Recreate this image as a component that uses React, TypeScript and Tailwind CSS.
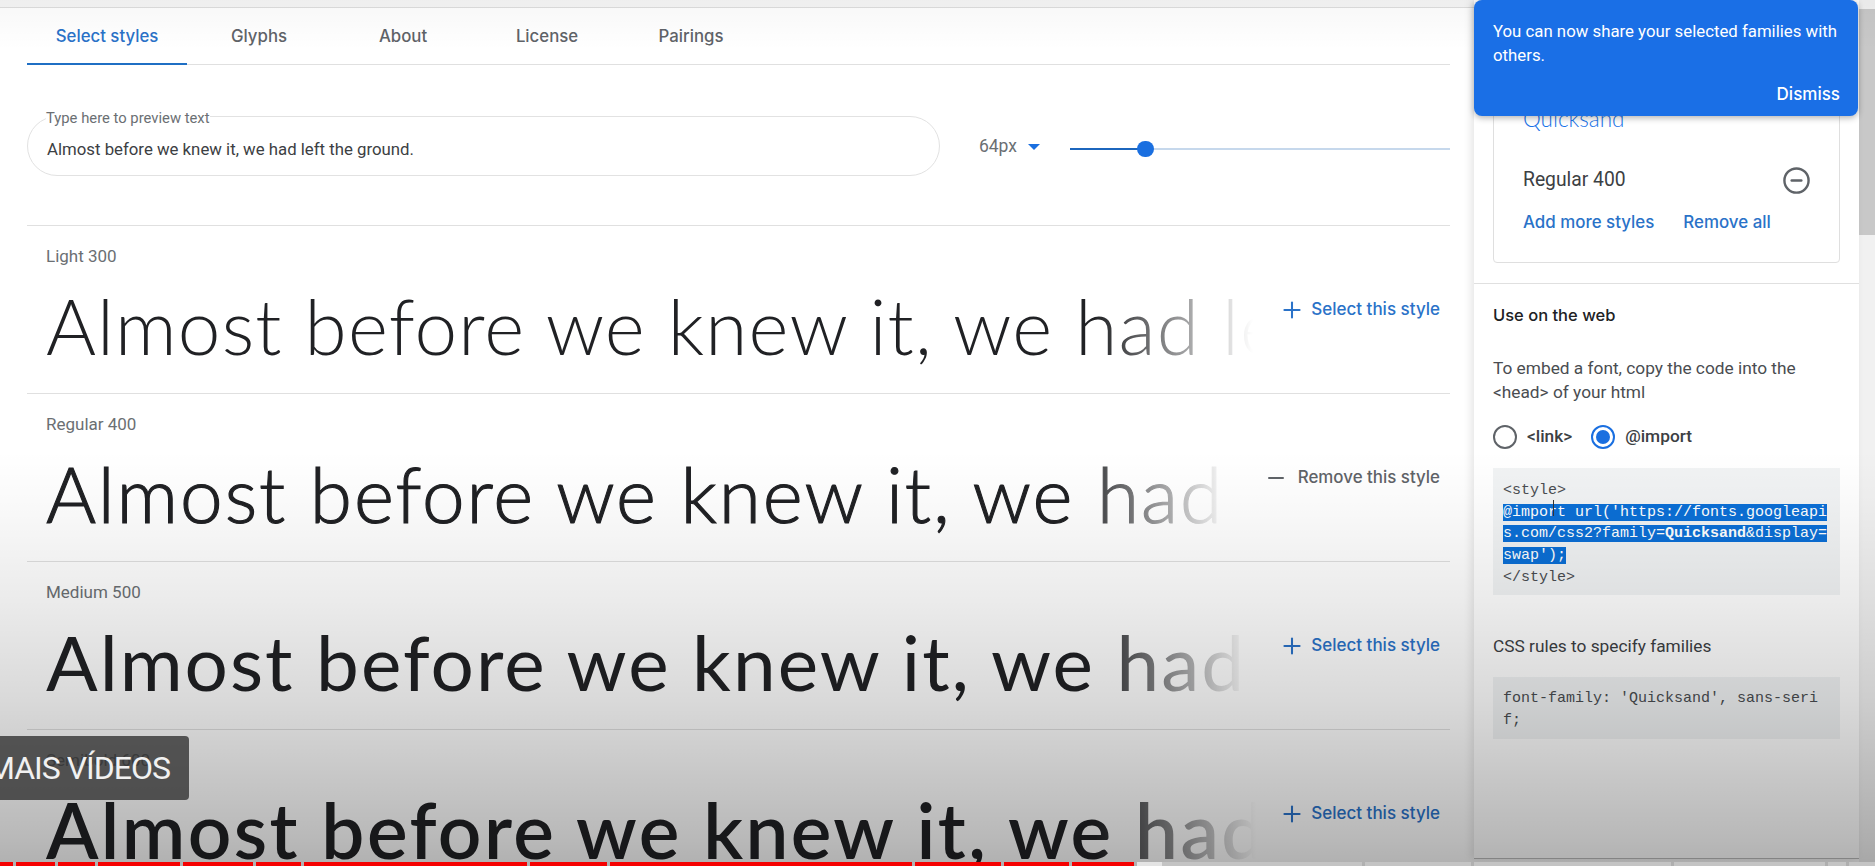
import { CircleMinus, Minus, Plus, X } from "lucide-react";

const rows = [
  { label: "Light 300", cls: "font-light tracking-[1.15px]", clip: "w-[1226px]", selected: false },
  { label: "Regular 400", cls: "font-light tracking-[1.9px] [-webkit-text-stroke:1.1px_#202124]", clip: "w-[1201px]", selected: true },
  { label: "Medium 500", cls: "font-normal tracking-[2px]", clip: "w-[1220px]", selected: false },
  { label: "Semibold 600", cls: "font-semibold tracking-[2.4px]", clip: "w-[1229px]", selected: false },
];

const tabs = [
  { t: "Glyphs" },
  { t: "About" },
  { t: "License" },
  { t: "Pairings" },
];

const segments = [
  "w-[13px] bg-[#f50000]", "w-[39px] bg-[#f50000]", "w-[37px] bg-[#f50000]", "w-[82px] bg-[#f50000]",
  "w-[70px] bg-[#f50000]", "w-[45px] bg-[#f50000]", "w-[223px] bg-[#f50000]", "w-[77px] bg-[#f50000]",
  "w-[302px] bg-[#f50000]", "w-[86px] bg-[#f50000]", "w-[65px] bg-[#f50000]", "w-[62px] bg-[#f50000]",
  "w-[25px] -mr-[3px] bg-[#e4e4e4]", "w-[200px] bg-[#c4c4c4]", "w-[106px] bg-[#c4c4c4]", "w-[197px] bg-[#c4c4c4]", "w-[151px] bg-[#c4c4c4]",
  "w-[18px] bg-[#c4c4c4]", "w-[27px] bg-[#c4c4c4]",
];

const sel = "bg-[#0b6fd6] text-white";

export default function App() {
  return (
    <div className="relative flex h-[866px] w-[1875px] overflow-hidden bg-white font-['Roboto',sans-serif] text-[#3c4043]">
      {/* main column */}
      <div className="w-[1474px] shrink-0 pl-[27px] pr-[24px]">
        <div className="-ml-[27px] -mr-[24px] h-[8px] border-b border-[#dedede] bg-[#f6f6f6]" />
        <div className="flex h-[57px] border-b border-[#e0e0e0] font-['Inter',sans-serif] text-[16.8px] font-medium text-[#5f6368]">
          <div className="-mb-px flex w-[160px] items-center justify-center border-b-2 border-[#1f6fc4] pt-[2px] text-[#2a72c8]">Select styles</div>
          {tabs.map((x) => (
            <div key={x.t} className="flex w-[144px] items-center justify-center pt-[2px]">{x.t}</div>
          ))}
        </div>

        <div className="flex items-center pb-[49px] pt-[51px]">
          <div className="relative flex h-[60px] w-[913px] items-center rounded-[30px] border border-[#e2e2e2] pl-[19px] pt-[7px] text-[16.8px] text-[#3c4043]">
            <span className="absolute -top-[8px] left-[18px] bg-white text-[14.8px] leading-[18px] text-[#6b6f73]">Type here to preview text</span>
            Almost before we knew it, we had left the ground.
          </div>
          <div className="ml-[39px] flex items-center">
            <span className="text-[17.5px] text-[#6b6f73]">64px</span>
            <span className="ml-[11px] mt-[2px] h-0 w-0 border-x-[6.5px] border-t-[6px] border-x-transparent border-t-[#1a6fe0]" />
          </div>
          <div className="relative ml-[30px] h-[2px] w-[380px] translate-y-[3px] bg-[#c6d8ec]">
            <div className="h-[2px] w-[75px] bg-[#1c66bd]" />
            <div className="absolute -top-[7px] left-[67px] h-[16px] w-[17px] rounded-full bg-[#1a6fe0]" />
          </div>
        </div>

        {rows.map((r) => (
          <div key={r.label} className="h-[168px] border-t border-[#e0e0e0] pt-[20px]">
            <div className="h-[20px] pl-[19px] text-[17px] leading-[20px] text-[#6b6f73]">{r.label}</div>
            <div className="flex items-start pr-[10px]">
              <div className={`${r.clip} shrink-0 overflow-hidden whitespace-nowrap pl-[19px] [mask-image:linear-gradient(to_right,black_87%,transparent)]`}>
                <div className={`font-['Lato',sans-serif] text-[76.5px] leading-[118px] text-[#202124] ${r.cls}`}>
                  Almost before we knew it, we had left the ground.
                </div>
              </div>
              {r.selected ? (
                <div className="ml-auto mt-[31px] flex items-center font-['Inter',sans-serif] text-[16.9px] font-medium text-[#5f6368]">
                  <Minus size={24} strokeWidth={2} className="mr-[10px]" />
                  Remove this style
                </div>
              ) : (
                <div className="ml-auto mt-[31px] flex items-center font-['Inter',sans-serif] text-[17px] font-medium text-[#2a72c8]">
                  <Plus size={26} strokeWidth={1.9} className="mr-[6px]" />
                  Select this style
                </div>
              )}
            </div>
          </div>
        ))}
      </div>

      {/* sidebar */}
      <div className="relative h-[859px] w-[385px] shrink-0 border-b border-[#bbbbbb] bg-white pt-[70px] shadow-[-3px_0_8px_rgba(0,0,0,0.1)]">
        <div className="mx-[19px] h-[193px] rounded-[4px] border border-[#dfdfdf] px-[29px] pt-[33px]">
          <div className="flex h-[30px] items-center justify-between">
            <span className="font-['Lato',sans-serif] text-[22.5px] font-light text-[#1a73e8]">Quicksand</span>
            <X size={20} className="-mr-[5px] -mt-[18px] text-[#5f6368]" />
          </div>
          <div className="mt-[30px] flex h-[32px] items-center justify-between">
            <span className="text-[19.3px] text-[#3c4043]">Regular 400</span>
            <CircleMinus size={29} strokeWidth={2} className="-mr-[1px] text-[#5f6368]" />
          </div>
          <div className="mt-[15px] flex h-[24px] items-center gap-[29px] font-['Inter',sans-serif] text-[16.9px] font-medium text-[#2a72c8]">
            <span>Add more styles</span>
            <span>Remove all</span>
          </div>
        </div>
        <div className="mt-[20px] border-t border-[#e0e0e0] px-[19px] pt-[19px]">
          <div className="h-[24px] font-['Inter',sans-serif] text-[16.5px] font-medium leading-[24px] text-[#202124]">Use on the web</div>
          <div className="mt-[29px] text-[17.3px] leading-[24px] text-[#4a4d51]">
            <div>To embed a font, copy the code into the</div>
            <div>&lt;head&gt; of your html</div>
          </div>
          <div className="mt-[21px] flex h-[24px] items-center text-[17.3px] font-medium text-[#3c4043]">
            <span className="h-[24px] w-[24px] rounded-full border-2 border-[#5f6368]" />
            <span className="ml-[10px]">&lt;link&gt;</span>
            <span className="ml-[19px] flex h-[24px] w-[24px] items-center justify-center rounded-full border-2 border-[#1a6fe0]">
              <span className="h-[14px] w-[14px] rounded-full bg-[#1a6fe0]" />
            </span>
            <span className="ml-[10px]">@import</span>
          </div>
          <div className="relative mt-[19px] h-[127px] bg-[#f1f3f4] pl-[10px] pt-[12px] font-['Liberation_Mono',monospace] text-[15px] leading-[21.7px] text-[#4a4d51]">
            <div>&lt;style&gt;</div>
            <div><span className={sel}>@import url('https://fonts.googleapi</span></div>
            <div><span className={sel}>s.com/css2?family=<b>Quicksand</b>&amp;display=</span></div>
            <div><span className={sel}>swap');</span></div>
            <div>&lt;/style&gt;</div>
            <span className="absolute left-[60px] top-[32px] h-[16px] w-[1px] bg-[#333333]" />
          </div>
          <div className="mt-[39px] h-[24px] text-[17.3px] leading-[24px] text-[#3c4043]">CSS rules to specify families</div>
          <div className="mt-[19px] h-[62px] bg-[#f1f3f4] pl-[10px] pt-[11px] font-['Liberation_Mono',monospace] text-[15px] leading-[21.7px] text-[#4a4d51]">
            <div>font-family: 'Quicksand', sans-seri</div>
            <div>f;</div>
          </div>
        </div>
      </div>

      {/* scrollbar */}
      <div className="w-[16px] shrink-0 bg-[#f1f1f1] pt-[9px]">
        <div className="h-[226px] bg-[#c8c8c8]" />
      </div>

      {/* video player gradient */}
      <div className="pointer-events-none absolute inset-0 bg-[linear-gradient(to_bottom,rgba(0,0,0,0.03)_0px,rgba(0,0,0,0)_50px,rgba(0,0,0,0)_450px,rgba(0,0,0,0.02)_500px,rgba(0,0,0,0.08)_600px,rgba(0,0,0,0.15)_700px,rgba(0,0,0,0.28)_840px,rgba(0,0,0,0.31)_866px)]" />

      {/* toast */}
      <div className="absolute left-[1474px] top-0 h-[116px] w-[384px] rounded-[8px] bg-[#1a6fe6] px-[19px] pt-[19px] text-[16.8px] leading-[24px] text-white shadow-[0_2px_6px_rgba(0,0,0,0.3)]">
        <div>You can now share your selected families with</div>
        <div>others.</div>
        <div className="-mr-[1px] mt-[15px] text-right font-['Inter',sans-serif] text-[17px] font-medium leading-[24px]">Dismiss</div>
      </div>

      {/* end-screen button */}
      <div className="absolute left-0 top-[736px] flex h-[64px] w-[189px] items-center justify-end overflow-hidden whitespace-nowrap rounded-r-[4px] bg-[rgba(50,50,50,0.8)] pr-[19px] text-[32px] tracking-[-1px] text-[#f1f1f1]">
        MAIS VÍDEOS
      </div>

      {/* progress bar */}
      <div className="absolute bottom-0 left-0 flex h-[4px] gap-[3px]">
        {segments.map((s, i) => (
          <div key={i} className={`${s} h-full shrink-0`} />
        ))}
      </div>
    </div>
  );
}
